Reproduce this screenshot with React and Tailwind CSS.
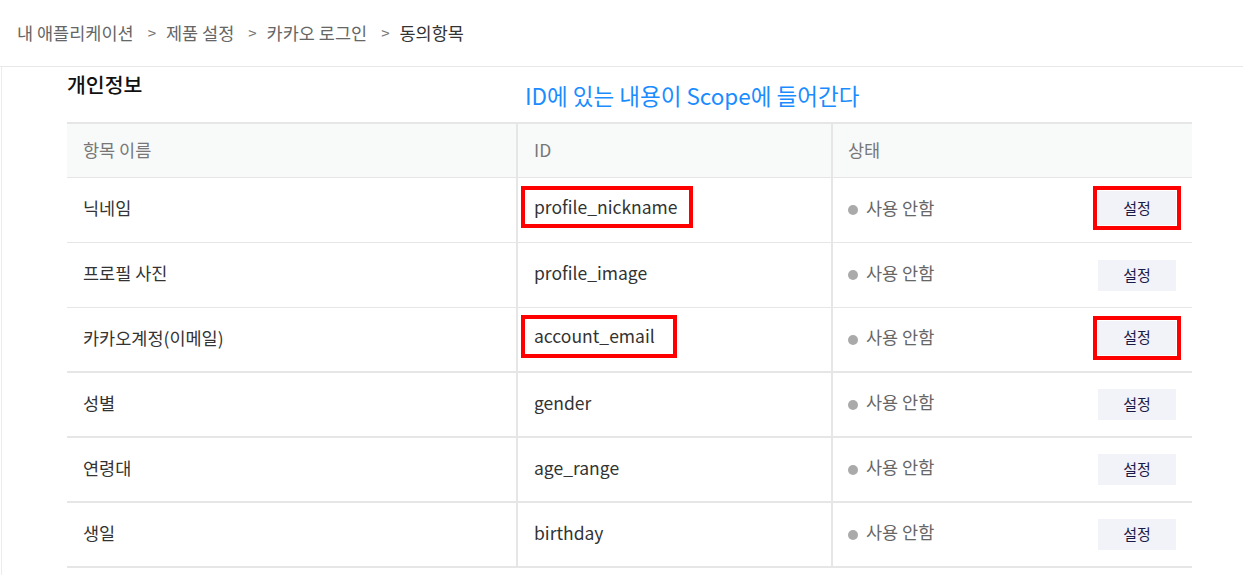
const rows = [
  { name: '닉네임', id: 'profile_nickname', markId: 'pr-[11px]', markBtn: true },
  { name: '프로필 사진', id: 'profile_image' },
  { name: '카카오계정(이메일)', id: 'account_email', markId: 'pr-[18px]', markBtn: true, thick: true },
  { name: '성별', id: 'gender', thick: true },
  { name: '연령대', id: 'age_range', thick: true },
  { name: '생일', id: 'birthday', thick: true },
];

function Row({ row }) {
  return (
    <div
      className={`grid h-[65px] grid-cols-[451px_315px_359px] border-[#e6e6e6] ${
        row.thick ? 'border-b-2' : 'border-b'
      }`}
    >
      <div className="flex items-center border-r-2 border-[#e6e6e6] pl-[16px] text-[17.5px] text-[#333]">
        <span className="-mt-[3px]">{row.name}</span>
      </div>
      <div className="flex items-center border-r-2 border-[#e6e6e6] pl-[16px] text-[17.5px] text-[#333]">
        {row.markId ? (
          <span className={`-ml-[13px] -mt-[6px] border-4 border-[#ff0000] py-[4px] pl-[9px] ${row.markId}`}>
            {row.id}
          </span>
        ) : (
          <span className="-mt-[3px]">{row.id}</span>
        )}
      </div>
      <div className="flex items-center justify-between pl-[15px] pr-[16px]">
        <div className="flex items-center gap-[8px] text-[17.5px] text-[#666]">
          <span className="h-[10px] w-[10px] rounded-full bg-[#aaaaaa]" />
          <span className="-mt-[4px]">사용 안함</span>
        </div>
        <button
          type="button"
          className={`h-[31px] w-[78px] bg-[#f2f3f8] text-[15px] text-[#1b1b4b] ${
            row.markBtn ? '-mt-[4px] h-[34px] outline-4 outline-offset-1 outline-[#ff0000]' : ''
          }`}
        >
          설정
        </button>
      </div>
    </div>
  );
}

export default function App() {
  return (
    <div
      className="h-[575px] w-[1243px] overflow-hidden bg-white"
      style={{ fontFamily: '"Noto Sans CJK KR", "Noto Sans", sans-serif' }}
    >
      <div className="flex h-[67px] items-center border-b border-[#e8e8e8] pl-[17px] text-[17.5px] text-[#666]">
        <span>내 애플리케이션</span>
        <span className="ml-[14px] mr-[10px] text-[15px] text-[#777]">&gt;</span>
        <span>제품 설정</span>
        <span className="ml-[14px] mr-[10px] text-[15px] text-[#777]">&gt;</span>
        <span>카카오 로그인</span>
        <span className="ml-[14px] mr-[10px] text-[15px] text-[#777]">&gt;</span>
        <span className="text-[#333]">동의항목</span>
      </div>

      <div className="ml-[1px] h-full border-l border-[#ececec] pl-[65px]">
        <div className="flex h-[55px] items-start">
          <h2 className="w-[458px] pt-[2px] text-[20.5px] font-medium text-[#111]">개인정보</h2>
          <p className="pt-[12px] text-[22.5px] text-[#1a8cff]">ID에 있는 내용이 Scope에 들어간다</p>
        </div>

        <div className="w-[1125px] border-t-2 border-[#e6e6e6]">
          <div className="grid h-[54px] grid-cols-[451px_315px_359px] border-b border-[#e6e6e6] bg-[#f8f9f9] text-[17.5px] text-[#777]">
            <div className="flex items-center border-r-2 border-[#e6e6e6] pl-[16px]">항목 이름</div>
            <div className="flex items-center border-r-2 border-[#e6e6e6] pl-[16px]">ID</div>
            <div className="flex items-center pl-[15px]">상태</div>
          </div>
          {rows.map((row) => (
            <Row key={row.id} row={row} />
          ))}
        </div>
      </div>
    </div>
  );
}
